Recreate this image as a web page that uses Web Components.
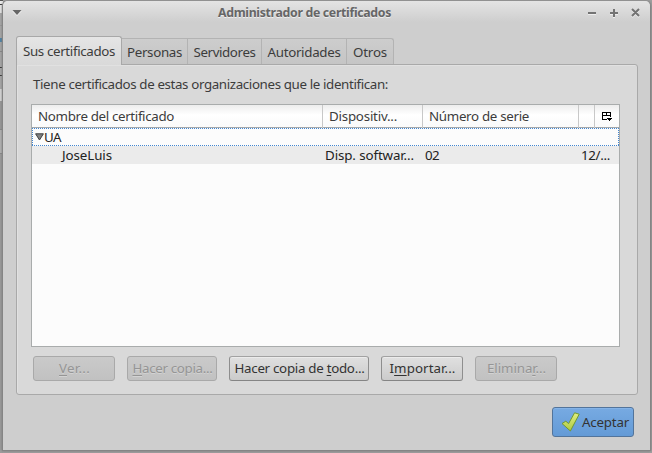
<!DOCTYPE html>
<html lang="es"><head><meta charset="utf-8"><title>Administrador de certificados</title>
<style>
html,body{margin:0;width:652px;height:453px;overflow:hidden}
body{font:13.33px/18px "Noto Sans","Open Sans",sans-serif;color:#3c3c3c;
background:linear-gradient(#555 0 1px,#eee 1px 4px,#333 4px 5px,#eee 5px 13px,#aaa 13px 25px,#999 25px 26px,#aaa 26px 38px,#4b83a8 38px 42px,#aaa 42px 51px,#888 51px 52px,#aaa 52px 67px,#333 67px 68px,#aaa 68px 75px,#333 75px 76px,#aaa 76px 89px,#ddd 89px 101px,#999 101px 129px,#888 129px 130px,#b5b5b5 130px 153px,#888 153px 154px,#9d9d9d 154px) 0 0/3px 100% no-repeat,#a0a0a0}
</style></head><body>
<cert-window>
 <fit-text slot="title" w="173">Administrador de certificados</fit-text>
 <cert-tabs>
  <cert-tab slot="tabs" active style="--w:106px"><fit-text w="92">Sus certificados</fit-text></cert-tab>
  <cert-tab slot="tabs" style="--w:66px"><fit-text w="55">Personas</fit-text></cert-tab>
  <cert-tab slot="tabs" style="--w:74px"><fit-text w="62">Servidores</fit-text></cert-tab>
  <cert-tab slot="tabs" style="--w:85px"><fit-text w="73">Autoridades</fit-text></cert-tab>
  <cert-tab slot="tabs" style="--w:47px"><fit-text w="34">Otros</fit-text></cert-tab>
  <fit-text w="355">Tiene certificados de estas organizaciones que le identifican:</fit-text>
  <cert-table></cert-table>
  <gtk-button slot="actions" disabled style="--w:82px"><fit-text w="31"><u>V</u>er...</fit-text></gtk-button>
  <gtk-button slot="actions" disabled style="--w:90px"><fit-text w="80"><u>H</u>acer copia...</fit-text></gtk-button>
  <gtk-button slot="actions" style="--w:140px"><fit-text w="130">Hacer copia de <u>t</u>odo...</fit-text></gtk-button>
  <gtk-button slot="actions" style="--w:82px"><fit-text w="66">I<u>m</u>portar...</fit-text></gtk-button>
  <gtk-button slot="actions" disabled style="--w:82px"><fit-text w="59">Elimina<u>r</u>...</fit-text></gtk-button>
 </cert-tabs>
 <gtk-button slot="footer" primary style="--w:82px;--h:30px"><check-icon></check-icon><fit-text w="47">Aceptar</fit-text></gtk-button>
</cert-window>
<script>
const define=(name,markup,setup)=>customElements.define(name,class extends HTMLElement{
 constructor(){super();this.attachShadow({mode:'open'}).innerHTML=markup}
 connectedCallback(){if(setup)setup(this)}
});
// A single-line label whose tracking is adjusted to a given width.
define('fit-text','<style>:host{display:block;white-space:nowrap;flex:none}span{display:inline-block}::slotted(u){text-underline-offset:2px;text-decoration-thickness:1px;text-decoration-skip-ink:none}</style><span><slot></slot></span>',el=>{
 const s=el.shadowRoot.querySelector('span'),w=+el.getAttribute('w');
 el.style.width=w+'px';
 requestAnimationFrame(()=>{s.style.letterSpacing=(w-s.getBoundingClientRect().width)/el.textContent.length+'px'});
});
define('check-icon',`<style>:host{display:block;width:19px;height:20px;flex:none}svg{display:block}</style>
<svg width="19" height="20" viewBox="0 0 19 20"><defs><linearGradient id="g" x2="0" y2="1"><stop stop-color="#e0ef80"/><stop offset="1" stop-color="#aec940"/></linearGradient></defs><path d="M1 11.5 4.8 9.2 7.6 11.6 13.6 .8 18.2 2.2 9.4 19Z" fill="url(#g)" stroke="#6f9830" stroke-width="1" stroke-linejoin="round"/></svg>`);
define('gtk-button',`<style>:host{display:flex;box-sizing:border-box;flex:none;width:var(--w);height:var(--h,25px);align-items:center;justify-content:center;padding:0 0 1px 1px;border:1px solid #8e8e8e;border-top-color:#a2a2a2;border-bottom-color:#858585;border-radius:3px;background:linear-gradient(#e0e0e0,#cbcbcb);box-shadow:inset 0 1px #ebebeb;color:#333}
:host([disabled]){background:linear-gradient(#cacaca,#c1c1c1);color:#959595;border-color:#a9a9a9;box-shadow:none;text-shadow:0 1px #d3d3d3}
:host([primary]){background:linear-gradient(#77aae2,#639ad6);border-color:#52749b;box-shadow:inset 0 1px #84b3e8;gap:2px;justify-content:flex-start;padding:0 0 0 8px}</style><slot></slot>`);
define('cert-tab',`<style>:host{display:flex;box-sizing:border-box;width:var(--w);height:26px;justify-content:center;padding-top:4px;border:1px solid #b3b3b3;border-left:0;border-bottom:0;background:linear-gradient(#cdcdcd,#c5c5c5)}
:host(:nth-of-type(5)){border-top-right-radius:3px}
:host([active]){height:29px;margin-bottom:-1px;padding-top:5px;border:1px solid #a8a8a8;border-bottom:0;border-radius:3px 3px 0 0;background:linear-gradient(#e5e5e5,#d9d9d9);position:relative;z-index:1}</style><slot></slot>`);
define('cert-tabs',`<style>:host{display:flex;flex-direction:column;margin:0 14px 0 13px;width:622px;flex:none}
.tabs{display:flex;align-items:flex-end;height:28px}
.panel{box-sizing:border-box;height:331px;padding:10px 16px 0 14px;border:1px solid #a9a9a9;border-radius:0 3px 3px 3px;background:#d9d9d9;box-shadow:inset 1px 1px #e1e1e1}
::slotted(fit-text){margin-left:2px}
.actions{display:flex;gap:12px;margin:9px 0 0 2px}</style>
<div class="tabs"><slot name="tabs"></slot></div><div class="panel"><slot></slot><div class="actions"><slot name="actions"></slot></div></div>`);
define('cert-table',`<style>:host{display:block;box-sizing:border-box;width:589px;height:243px;margin-top:11px;border:1px solid #a9acac;background:#fcfcfc;color:#222}
.r{display:grid;grid-template-columns:291px 100px 156px 16px 24px;box-sizing:border-box}
.h{height:22px;background:linear-gradient(#ededed,#fff 45%,#fafafa);color:#3c3c3c;line-height:23px}
.h>div{box-sizing:border-box;border-right:1px solid #c8c8c8;padding-left:6px}.h>div:last-child{border:0;padding:7px 0 0 7px}
.line{height:1px;background:#a5a8aa}
.ua{display:flex;box-sizing:border-box;height:18px;align-items:center;padding-left:3px}
.focus{height:18px;background:repeating-linear-gradient(90deg,#4386d0 0 1px,transparent 1px 2px) top/100% 1px no-repeat,repeating-linear-gradient(90deg,#4386d0 0 1px,transparent 1px 2px) bottom/100% 1px no-repeat,repeating-linear-gradient(#4386d0 0 1px,transparent 1px 2px) left/1px 100% no-repeat,repeating-linear-gradient(#4386d0 0 1px,transparent 1px 2px) right/1px 100% no-repeat}
.c{height:18px;background:#ebebeb;line-height:19px}
.c>div{padding-left:2px}svg{display:block;flex:none}</style>
<div class="r h"><div><fit-text w="136">Nombre del certificado</fit-text></div><div><fit-text w="68">Dispositiv...</fit-text></div><div><fit-text w="100">Número de serie</fit-text></div><div></div><div><svg width="11" height="10" shape-rendering="crispEdges"><path d="M0 0h9v5H8V4H1v3h4v1H0ZM1 1v2h3V1ZM5 1v2h3V1ZM5 6h5v1H9v1H8v1H7V8H6V7H5Z" fill="#000" fill-rule="evenodd"/></svg></div></div>
<div class="line"></div><div class="ua focus"><svg width="9" height="8"><path d="M.6.8h7.8L4.5 7Z" fill="#808080" stroke="#3f3f3f"/></svg><fit-text w="17">UA</fit-text></div>
<div class="r c"><div style="padding-left:30px"><fit-text w="50">JoseLuis</fit-text></div><div><fit-text w="89">Disp. softwar...</fit-text></div><div><fit-text w="14">02</fit-text></div><div style="padding-left:2px"><fit-text w="29">12/...</fit-text></div><div></div></div>`);
define('cert-window',`<style>:host{display:flex;flex-direction:column;box-sizing:border-box;width:649px;height:450px;margin:1px 0 2px 2px;border:1px solid #858585;border-top:0;border-radius:5px 5px 0 0;background:#cecece;box-shadow:0 0 3px #777}
header{display:grid;grid-template-columns:205px 1fr 56px;height:21px;padding:0 8px 0 9px;background:linear-gradient(#e4e4e4,#cecece);border-radius:5px 5px 0 0;margin-bottom:14px;color:#666;align-items:center;flex:none}
.t{font:bold 12.3px/18px "Noto Sans","Open Sans",sans-serif;padding:2px 0 0 1px;text-shadow:0 1px #eee}
svg{display:block}footer{display:flex;justify-content:flex-end;padding:12px 16px 0 0}</style>
<header><svg width="10" height="8"><path d="M0 3h10L5 8Z" fill="#eee"/><path d="M.5 2h9L5 7Z" fill="#666"/></svg><div class="t"><slot name="title"></slot></div>
<svg width="56" height="12"><g fill="none" stroke-width="2"><path d="M2 8h8M24 8h8M28 4v8M46 4l7 7m0-7-7 7" stroke="#eee"/><path d="M2 7h8M24 7h8M28 3v8M46 3l7 7m0-7-7 7" stroke="#737373"/></g></svg></header><slot></slot><footer><slot name="footer"></slot></footer>`);
</script></body></html>
